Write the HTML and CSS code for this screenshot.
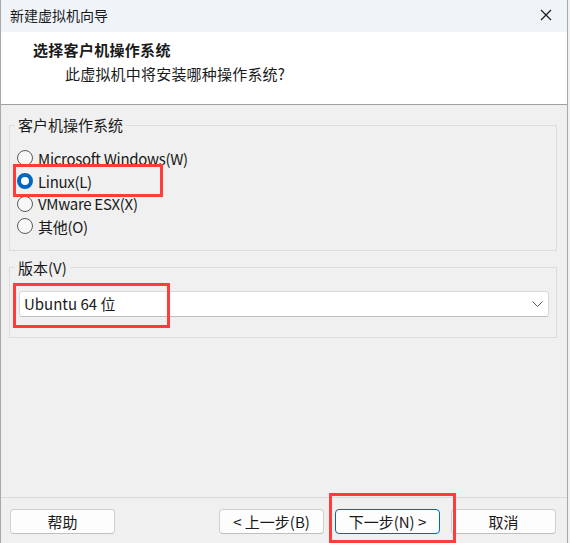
FILE: index.html
```html
<!DOCTYPE html>
<html lang="zh-CN">
<head>
    <meta charset="UTF-8">
    <meta name="viewport" content="width=device-width, initial-scale=1.0">
    <title>新建虚拟机向导</title>
    <link rel="stylesheet" href="styles.css">
</head>
<body>
    <div class="window">
        <div class="titlebar">
            <span class="title">新建虚拟机向导</span>
            <svg class="close" width="12" height="12" viewBox="0 0 12 12">
                <path d="M1 1 L11 11 M11 1 L1 11" stroke="#1a1a1a" stroke-width="1.2" fill="none"/>
            </svg>
        </div>

        <div class="header">
            <h1>选择客户机操作系统</h1>
            <p>此虚拟机中将安装哪种操作系统?</p>
        </div>

        <div class="content">
            <fieldset class="group group-os">
                <legend>客户机操作系统</legend>
                <div class="radio-list">
                    <div class="radio"><span class="dot"></span>Microsoft Windows(W)</div>
                    <div class="radio checked"><span class="dot"></span>Linux(L)</div>
                    <div class="radio"><span class="dot"></span>VMware ESX(X)</div>
                    <div class="radio"><span class="dot"></span>其他(O)</div>
                </div>
            </fieldset>

            <fieldset class="group group-version">
                <legend>版本(V)</legend>
                <div class="combo">
                    <span>Ubuntu 64 位</span>
                    <svg width="11" height="6" viewBox="0 0 11 6">
                        <path d="M0.5 0.5 L5.5 5.5 L10.5 0.5" stroke="#555" stroke-width="1" fill="none"/>
                    </svg>
                </div>
            </fieldset>
        </div>

        <div class="footer">
            <button class="btn">帮助</button>
            <div class="spacer"></div>
            <button class="btn">&lt; 上一步(B)</button>
            <button class="btn btn-default">下一步(N) &gt;</button>
            <button class="btn">取消</button>
        </div>

        <!-- красные рамки-пометки -->
        <div class="mark mark-linux"></div>
        <div class="mark mark-version"></div>
        <div class="mark mark-next"></div>
    </div>
</body>
</html>
```

FILE: styles.css
```css
:root {
    --title-bg: #eff4f9;
    --panel-bg: #f0f0f0;
    --line-color: #dcdcdc;
    --text-color: #1a1a1a;
    --accent-color: #0067c0;
    --mark-color: #ff3b3b;
}

* {
    box-sizing: border-box;
    margin: 0;
    padding: 0;
}

body {
    width: 570px;
    height: 543px;
    overflow: hidden;
    background-color: var(--panel-bg);
    color: var(--text-color);
    font-family: "Noto Sans CJK SC", "Noto Sans", sans-serif;
    font-size: 15px;
}

.window {
    position: relative;
    width: 568px;
    height: 543px;
    display: flex;
    flex-direction: column;
    border-left: 1px solid #a8a8a8;
    border-right: 1px solid #a8a8a8;
    background-color: var(--panel-bg);
}

.titlebar {
    height: 32px;
    flex: none;
    display: flex;
    align-items: center;
    justify-content: space-between;
    padding: 0 15px 2px 9px;
    background-color: var(--title-bg);
    font-size: 14px;
}

.header {
    height: 73px;
    flex: none;
    background-color: #fff;
    border-bottom: 1px solid #a0a0a0;
    padding: 8px 0 0 32px;
}

.header h1 {
    font-size: 15px;
    font-weight: bold;
    line-height: 20px;
    letter-spacing: 0.3px;
}

.header p {
    margin-top: 4px;
    padding-left: 32px;
    line-height: 20px;
    letter-spacing: 0.2px;
}

.content {
    flex: 1;
    padding: 10px 10px 0 8px;
}

.group {
    border: 1px solid var(--line-color);
    padding: 0 0 0 5px;
}

.group legend {
    padding: 0 3px;
    line-height: 20px;
}

.group-os {
    padding-bottom: 12px;
}

.radio-list {
    margin-top: 12px;
}

.radio {
    height: 22.7px;
    display: flex;
    align-items: center;
    padding-left: 2px;
    letter-spacing: -0.3px;
}

.radio .dot {
    width: 16px;
    height: 16px;
    border-radius: 50%;
    border: 1px solid #5a5a5a;
    background-color: #f7f7f7;
    margin-right: 5px;
    flex: none;
}

.radio.checked .dot {
    border: 4.5px solid var(--accent-color);
    background-color: #fff;
}

.group-version {
    margin-top: 7px;
    padding-bottom: 20px;
}

.combo {
    margin: 13px 0 0 4px;
    width: 530px;
    height: 26px;
    display: flex;
    align-items: center;
    justify-content: space-between;
    padding: 0 5px 0 4px;
    background-color: #fff;
    border: 1px solid #d9d9d9;
    border-bottom-color: #bdbdbd;
    border-radius: 3px;
}

.footer {
    height: 46px;
    flex: none;
    display: flex;
    align-items: flex-start;
    gap: 11px;
    padding: 11px 11px 0 9px;
    border-top: 1px solid #dadada;
}

.spacer {
    flex: 1;
}

.btn {
    width: 105px;
    height: 25px;
    font-family: inherit;
    font-size: 15px;
    color: var(--text-color);
    background-color: #fdfdfd;
    border: 1px solid #d0d0d0;
    border-bottom-color: #c0c0c0;
    border-radius: 4px;
}

.btn-default {
    border-color: var(--accent-color);
}

.mark {
    position: absolute;
    border: 3px solid var(--mark-color);
}

.mark-linux {
    left: 12px;
    top: 164px;
    width: 150px;
    height: 33px;
}

.mark-version {
    left: 12px;
    top: 283px;
    width: 157px;
    height: 45px;
}

.mark-next {
    left: 328px;
    top: 493px;
    width: 127px;
    height: 50px;
}
```
